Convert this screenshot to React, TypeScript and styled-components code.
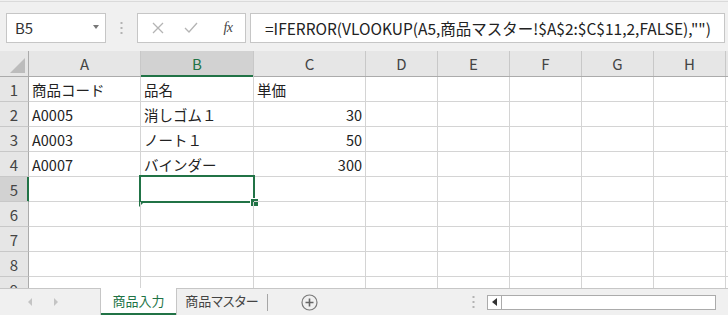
import React from 'react';
import styled, { createGlobalStyle } from 'styled-components';

const GlobalStyle = createGlobalStyle`
  html, body {
    margin: 0;
    padding: 0;
    background: #f0f0f0;
  }
  * {
    box-sizing: border-box;
  }
`;

const FONT = `"Noto Sans CJK JP", "Noto Sans", sans-serif`;
const GREEN = '#217346';

const columns = [
  { label: 'A', width: 112 },
  { label: 'B', width: 113 },
  { label: 'C', width: 112 },
  { label: 'D', width: 72 },
  { label: 'E', width: 72 },
  { label: 'F', width: 72 },
  { label: 'G', width: 72 },
  { label: 'H', width: 72 },
  { label: '', width: 72 },
];

const data: string[][] = [
  ['商品コード', '品名', '単価'],
  ['A0005', '消しゴム１', '30'],
  ['A0003', 'ノート１', '50'],
  ['A0007', 'バインダー', '300'],
  [],
  [],
  [],
  [],
  [],
];

const Window = styled.div`
  width: 728px;
  height: 315px;
  display: flex;
  flex-direction: column;
  overflow: hidden;
  background: #f0f0f0;
  font-family: ${FONT};
`;

/* ---------- formula bar ---------- */

const Toolbar = styled.div`
  height: 50px;
  flex-shrink: 0;
  display: flex;
  align-items: center;
  padding: 2px 3px 0 6px;
  border-top: 1px solid #dadada;
  margin-top: 1px;
`;

const NameBox = styled.div`
  width: 100px;
  height: 30px;
  background: #fff;
  border: 1px solid #c6c6c6;
  display: flex;
  align-items: center;
  justify-content: space-between;
  padding: 0 6px 0 8px;
  font-size: 15px;
  color: #333;
`;

const DropArrow = styled.span`
  width: 0;
  height: 0;
  border-left: 3.5px solid transparent;
  border-right: 3.5px solid transparent;
  border-top: 4px solid #777;
  margin-top: -2px;
`;

const Grip = styled.div<{ $width: number }>`
  width: ${(p) => p.$width}px;
  display: flex;
  justify-content: center;
  align-self: center;
`;

const ButtonBox = styled.div`
  width: 109px;
  height: 30px;
  background: #fff;
  border: 1px solid #c6c6c6;
  display: flex;
  align-items: center;
  padding-left: 12px;
`;

const BarButton = styled.span<{ $width: number; $dark?: boolean }>`
  width: ${(p) => p.$width}px;
  display: flex;
  align-items: center;
  justify-content: center;
  color: ${(p) => (p.$dark ? '#555' : '#b4b4b4')};
`;

const Fx = styled.span`
  font-family: "Liberation Serif", serif;
  font-style: italic;
  font-size: 14px;
  color: #444;
  letter-spacing: -0.5px;
`;

const FormulaInput = styled.div`
  flex: 1;
  height: 30px;
  margin-left: 4px;
  background: #fff;
  border: 1px solid #c6c6c6;
  display: flex;
  align-items: center;
  padding-left: 14px;
  font-size: 15.5px;
  color: #222;
  white-space: nowrap;
  overflow: hidden;
`;

/* ---------- grid ---------- */

const Sheet = styled.div`
  flex: 1;
  overflow: hidden;
  background: #fff;
`;

const GridRow = styled.div`
  display: flex;
  height: 25px;
`;

const HeaderRow = styled(GridRow)`
  height: 26px;
  background: #e6e6e6;
  border-bottom: 1px solid #ababab;
`;

const Corner = styled.div`
  width: 29px;
  flex-shrink: 0;
  border-right: 1px solid #ababab;
  position: relative;

  &::after {
    content: '';
    position: absolute;
    right: 3px;
    bottom: 3px;
    width: 0;
    height: 0;
    border-left: 15px solid transparent;
    border-bottom: 15px solid #bcbcbc;
  }
`;

const ColHeader = styled.div<{ $width: number; $active?: boolean }>`
  width: ${(p) => p.$width}px;
  flex-shrink: 0;
  display: flex;
  align-items: center;
  justify-content: center;
  font-size: 15px;
  color: ${(p) => (p.$active ? GREEN : '#444')};
  background: ${(p) => (p.$active ? '#d2d2d2' : 'transparent')};
  border-right: 1px solid #c8c8c8;
  box-shadow: ${(p) => (p.$active ? `inset 0 -2px 0 ${GREEN}` : 'none')};
  margin-bottom: ${(p) => (p.$active ? '-1px' : '0')};
  padding-bottom: 1px;
`;

const RowHeader = styled.div<{ $active?: boolean }>`
  width: 29px;
  flex-shrink: 0;
  display: flex;
  align-items: center;
  justify-content: center;
  font-size: 15px;
  color: #444;
  background: ${(p) => (p.$active ? '#d2d2d2' : '#e6e6e6')};
  border-right: 1px solid ${(p) => (p.$active ? GREEN : '#ababab')};
  border-bottom: 1px solid #c8c8c8;
  box-shadow: ${(p) => (p.$active ? `inset -1px 0 0 ${GREEN}` : 'none')};
`;

const Cell = styled.div<{ $width: number; $align?: 'left' | 'right' }>`
  width: ${(p) => p.$width}px;
  flex-shrink: 0;
  position: relative;
  display: flex;
  align-items: center;
  justify-content: ${(p) => (p.$align === 'right' ? 'flex-end' : 'flex-start')};
  padding: 1px 3px 0 3px;
  font-size: 14.5px;
  color: #222;
  white-space: nowrap;
  border-right: 1px solid #d4d4d4;
  border-bottom: 1px solid #d4d4d4;
`;

const Selection = styled.div`
  position: absolute;
  left: -2px;
  top: -2px;
  right: -2px;
  bottom: -2px;
  border: 2px solid ${GREEN};
  pointer-events: none;
`;

const FillHandle = styled.span`
  position: absolute;
  right: -6px;
  bottom: -6px;
  width: 9px;
  height: 9px;
  background: ${GREEN};
  border: 1px solid #fff;
`;

const CornerMark = styled.span`
  position: absolute;
  left: -2px;
  bottom: -6px;
  width: 0;
  height: 0;
  border-top: 5px solid ${GREEN};
  border-right: 5px solid transparent;
`;

/* ---------- sheet tabs ---------- */

const TabBar = styled.div`
  height: 27px;
  flex-shrink: 0;
  display: flex;
  align-items: stretch;
  background: #f0f0f0;
  border-top: 1px solid #c6c6c6;
`;

const NavArea = styled.div`
  width: 100px;
  display: flex;
  align-items: center;
  gap: 22px;
  padding-left: 28px;
`;

const NavArrow = styled.span<{ $dir: 'left' | 'right' }>`
  width: 0;
  height: 0;
  border-top: 4px solid transparent;
  border-bottom: 4px solid transparent;
  ${(p) =>
    p.$dir === 'left'
      ? 'border-right: 4px solid #c4c4c4;'
      : 'border-left: 4px solid #c4c4c4;'}
`;

const SheetTab = styled.div<{ $active?: boolean; $width: number }>`
  width: ${(p) => p.$width}px;
  margin-top: -1px;
  display: flex;
  align-items: center;
  justify-content: center;
  font-size: 13px;
  font-feature-settings: "palt";
  color: ${(p) => (p.$active ? GREEN : '#444')};
  background: ${(p) => (p.$active ? '#fff' : 'transparent')};
  border-left: ${(p) => (p.$active ? '1px solid #c6c6c6' : 'none')};
  border-right: ${(p) => (p.$active ? '1px solid #c6c6c6' : 'none')};
  box-shadow: ${(p) => (p.$active ? `inset 0 -2px 0 ${GREEN}` : 'none')};
  padding-bottom: 2px;
`;

const TabDivider = styled.span`
  width: 1px;
  align-self: center;
  height: 17px;
  background: #a6a6a6;
`;

const AddSheet = styled.div`
  width: 82px;
  display: flex;
  align-items: center;
  justify-content: center;
`;

const Spacer = styled.div`
  flex: 1;
`;

const ScrollTrack = styled.div`
  width: 229px;
  height: 15px;
  align-self: center;
  margin: 0 12px 0 10px;
  background: #fff;
  border: 1px solid #ababab;
  display: flex;
`;

const ScrollButton = styled.div`
  width: 14px;
  border-right: 1px solid #ababab;
  display: flex;
  align-items: center;
  justify-content: center;

  &::before {
    content: '';
    width: 0;
    height: 0;
    border-top: 4px solid transparent;
    border-bottom: 4px solid transparent;
    border-right: 5px solid #333;
  }
`;

function VDots() {
  return (
    <svg width="3" height="12" viewBox="0 0 3 12">
      <rect x="0.5" y="0" width="2" height="2" fill="#b3b3b3" />
      <rect x="0.5" y="5" width="2" height="2" fill="#b3b3b3" />
      <rect x="0.5" y="10" width="2" height="2" fill="#b3b3b3" />
    </svg>
  );
}

function Cross() {
  return (
    <svg width="12" height="12" viewBox="0 0 12 12">
      <path d="M1 1 L11 11 M11 1 L1 11" stroke="currentColor" strokeWidth="1.3" />
    </svg>
  );
}

function Check() {
  return (
    <svg width="14" height="12" viewBox="0 0 14 12">
      <path d="M1 6 L5 10 L13 1" stroke="currentColor" strokeWidth="1.3" fill="none" />
    </svg>
  );
}

function PlusCircle() {
  return (
    <svg width="17" height="17" viewBox="0 0 17 17">
      <circle cx="8.5" cy="8.5" r="7.5" fill="none" stroke="#7a7a7a" strokeWidth="1.2" />
      <path d="M8.5 4.5 V12.5 M4.5 8.5 H12.5" stroke="#666" strokeWidth="1.6" />
    </svg>
  );
}

export default function App() {
  const selRow = 4;
  const selCol = 1;

  return (
    <>
      <GlobalStyle />
      <Window>
        <Toolbar>
          <NameBox>
            B5
            <DropArrow />
          </NameBox>
          <Grip $width={31}>
            <VDots />
          </Grip>
          <ButtonBox>
            <BarButton $width={16}>
              <Cross />
            </BarButton>
            <BarButton $width={50}>
              <Check />
            </BarButton>
            <BarButton $width={24} $dark>
              <Fx>fx</Fx>
            </BarButton>
          </ButtonBox>
          <FormulaInput>
            =IFERROR(VLOOKUP(A5,商品マスター!$A$2:$C$11,2,FALSE),&quot;&quot;)
          </FormulaInput>
        </Toolbar>

        <Sheet>
          <HeaderRow>
            <Corner />
            {columns.map((c, i) => (
              <ColHeader key={i} $width={c.width} $active={i === selCol}>
                {c.label}
              </ColHeader>
            ))}
          </HeaderRow>
          {data.map((row, r) => (
            <GridRow key={r}>
              <RowHeader $active={r === selRow}>{r + 1}</RowHeader>
              {columns.map((c, i) => {
                const value = row[i] ?? '';
                const numeric = value !== '' && !isNaN(Number(value));
                return (
                  <Cell key={i} $width={c.width} $align={numeric ? 'right' : 'left'}>
                    {value}
                    {r === selRow && i === selCol && (
                      <Selection>
                        <CornerMark />
                        <FillHandle />
                      </Selection>
                    )}
                  </Cell>
                );
              })}
            </GridRow>
          ))}
        </Sheet>

        <TabBar>
          <NavArea>
            <NavArrow $dir="left" />
            <NavArrow $dir="right" />
          </NavArea>
          <SheetTab $active $width={77}>
            商品入力
          </SheetTab>
          <SheetTab $width={90}>商品マスター</SheetTab>
          <TabDivider />
          <AddSheet>
            <PlusCircle />
          </AddSheet>
          <Spacer />
          <Grip $width={8}>
            <VDots />
          </Grip>
          <ScrollTrack>
            <ScrollButton />
          </ScrollTrack>
        </TabBar>
      </Window>
    </>
  );
}
